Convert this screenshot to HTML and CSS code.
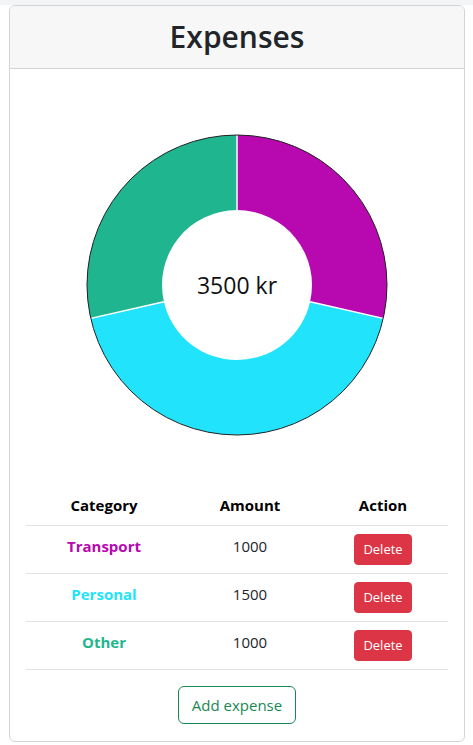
FILE: index.html
```html
<!DOCTYPE html>
<html lang="en">
<head>
<meta charset="utf-8">
<title>Expenses</title>
<link rel="stylesheet" href="styles.css">
</head>
<body>
<div class="topbar"></div>
<div class="card">
  <div class="card-header">
    <h1 class="title">Expenses</h1>
  </div>
  <div class="card-body">
    <div class="chart">
      <svg class="donut" width="302" height="302" viewBox="0 0 302 302">
        <path d="M151 1 A150 150 0 0 1 297.24 184.38 L224.12 167.69 A75 75 0 0 0 151 76 Z" fill="#b808b0"/>
        <path d="M297.24 184.38 A150 150 0 0 1 4.76 184.38 L77.88 167.69 A75 75 0 0 0 224.12 167.69 Z" fill="#22e3fc"/>
        <path d="M4.76 184.38 A150 150 0 0 1 151 1 L151 76 A75 75 0 0 0 77.88 167.69 Z" fill="#1fb68f"/>
        <g stroke="#ffffff" stroke-width="1.5">
          <line x1="151" y1="1" x2="151" y2="76"/>
          <line x1="297.24" y1="184.38" x2="224.12" y2="167.69"/>
          <line x1="4.76" y1="184.38" x2="77.88" y2="167.69"/>
        </g>
        <circle cx="151" cy="151" r="150" fill="none" stroke="#222" stroke-width="1"/>
      </svg>
      <div class="total">3500 kr</div>
    </div>
    <table class="table">
      <thead>
        <tr><th class="c1">Category</th><th class="c2">Amount</th><th class="c3">Action</th></tr>
      </thead>
      <tbody>
        <tr><td class="cat transport">Transport</td><td>1000</td><td><button class="btn-delete">Delete</button></td></tr>
        <tr><td class="cat personal">Personal</td><td>1500</td><td><button class="btn-delete">Delete</button></td></tr>
        <tr><td class="cat other">Other</td><td>1000</td><td><button class="btn-delete">Delete</button></td></tr>
      </tbody>
    </table>
    <div class="actions">
      <button class="btn-add">Add expense</button>
    </div>
  </div>
</div>
</body>
</html>
```
FILE: styles.css
```css
html, body {
  margin: 0;
  padding: 0;
  background: #ffffff;
  font-family: "Segoe UI", "Open Sans", "Noto Sans", sans-serif;
  color: #212529;
}
.topbar {
  height: 5px;
  background: #f3f4f6;
}
.card {
  margin: 0 8px 0 9px;
  border: 1px solid #d3d3d3;
  border-radius: 6px;
  background: #fff;
  overflow: hidden;
}
.card-header {
  background: #f7f7f7;
  border-bottom: 1px solid #d3d3d3;
  padding: 12px 16px 4px;
  text-align: center;
}
.title {
  margin: 0 0 8px;
  font-size: 30px;
  font-weight: 600;
  line-height: 38px;
  color: #212529;
}
.card-body {
  padding: 16px 16px 17px;
}
.chart {
  position: relative;
  display: flex;
  justify-content: center;
  padding: 49px 0 49px;
}
.donut {
  display: block;
}
.total {
  position: absolute;
  left: 0;
  right: 0;
  top: 49px;
  height: 302px;
  display: flex;
  align-items: center;
  justify-content: center;
  font-size: 23px;
  color: #111;
}
.table {
  width: 100%;
  border-collapse: collapse;
  vertical-align: top;
  font-size: 15px;
}
.table th, .table td {
  padding: 8px;
  text-align: center;
  border-bottom: 1px solid #dee2e6;
  line-height: 24px;
  vertical-align: top;
}
.table th {
  font-weight: 700;
  color: #000;
}
.c1 { width: 140px; }
.c2 { width: 120px; }
.c3 { width: 114px; }
.cat { font-weight: 700; }
.transport { color: #b808b0; }
.personal { color: #22e3fc; }
.other { color: #1fb68f; }
.btn-delete {
  font-family: inherit;
  font-size: 13px;
  line-height: 21px;
  padding: 4px 8px;
  border: 1px solid #dc3545;
  border-radius: 4px;
  background: #dc3545;
  color: #fff;
  width: 58px;
}
.actions {
  display: flex;
  justify-content: center;
  padding-top: 16px;
}
.btn-add {
  font-family: inherit;
  font-size: 15px;
  line-height: 24px;
  padding: 6px 12px;
  border: 1px solid #198754;
  border-radius: 6px;
  background: #fff;
  color: #198754;
  width: 118px;
}
```
